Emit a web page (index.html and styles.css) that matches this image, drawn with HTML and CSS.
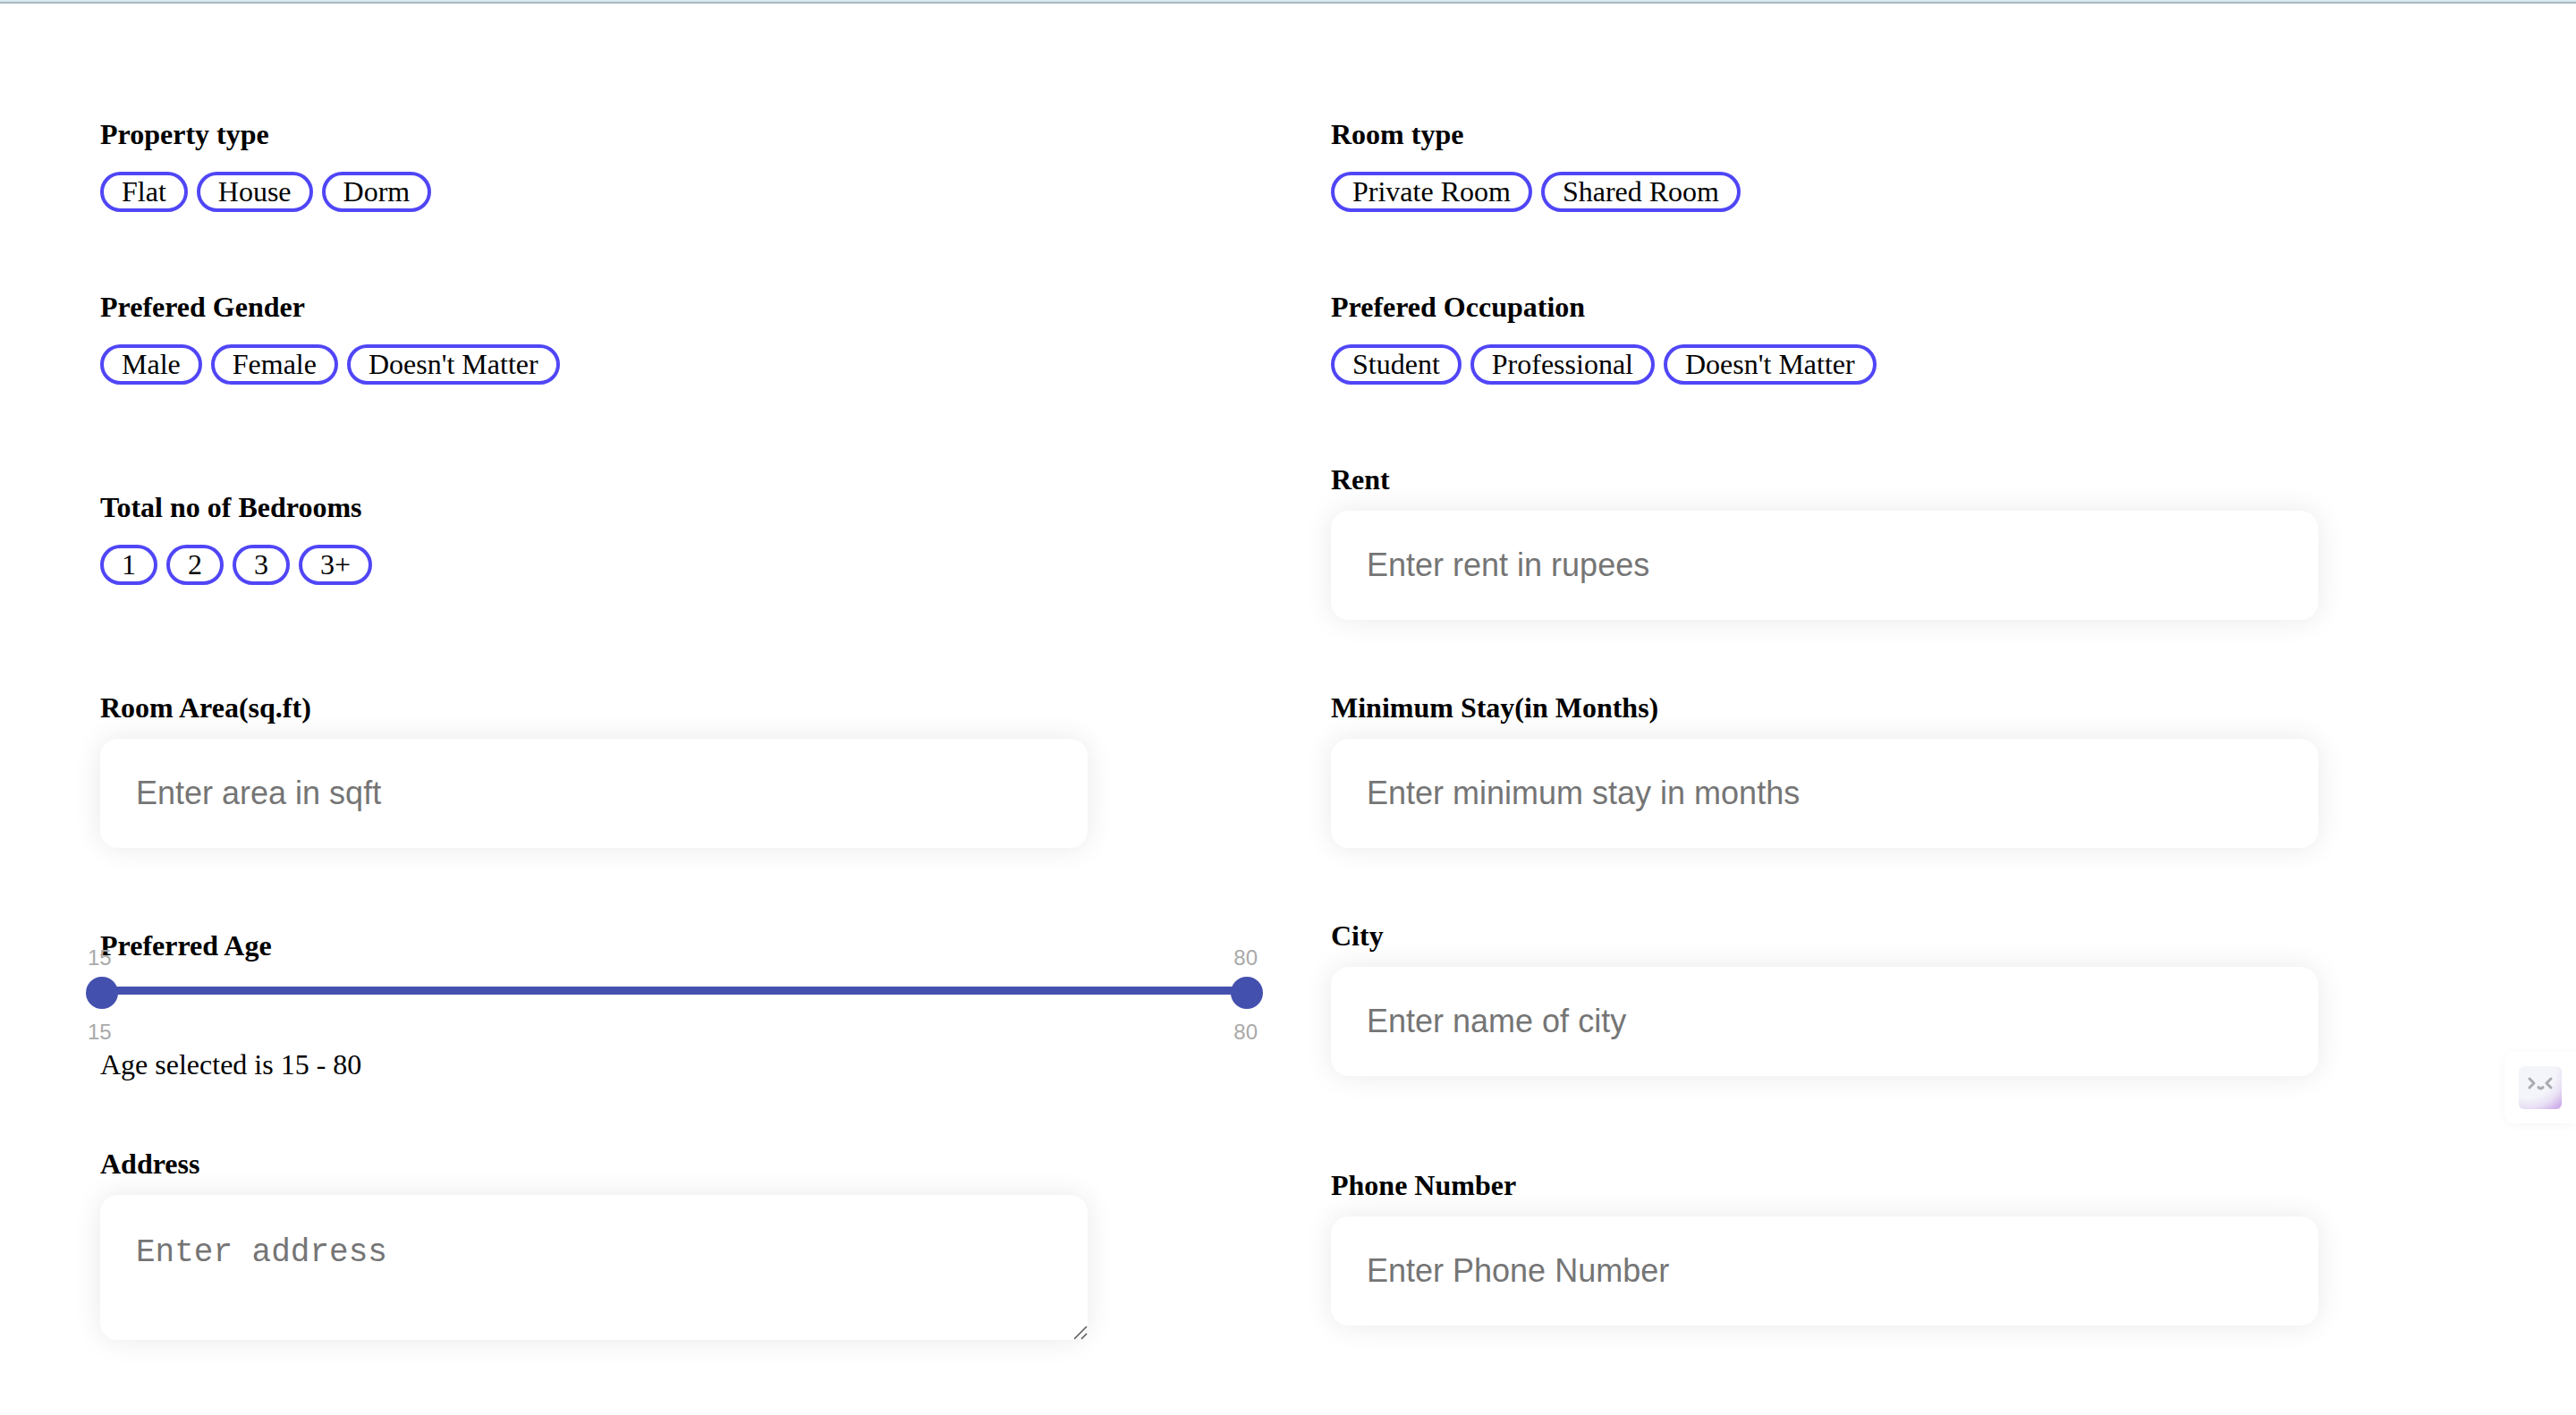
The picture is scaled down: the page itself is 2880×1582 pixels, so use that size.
FILE: index.html
```html
<!DOCTYPE html>
<html lang="en">
<head>
  <meta charset="utf-8">
  <meta name="viewport" content="width=device-width, initial-scale=1">
  <title>Room details</title>
  <link rel="stylesheet" href="styles.css">
</head>
<body>
  <form class="listing-form">
    <div class="field" role="group" aria-labelledby="property-type">
      <span class="field-label" id="property-type">Property type</span>
      <div class="chips">
        <button type="button" class="chip">Flat</button>
        <button type="button" class="chip">House</button>
        <button type="button" class="chip">Dorm</button>
      </div>
    </div>
    <div class="field" role="group" aria-labelledby="room-type">
      <span class="field-label" id="room-type">Room type</span>
      <div class="chips">
        <button type="button" class="chip">Private Room</button>
        <button type="button" class="chip">Shared Room</button>
      </div>
    </div>
    <div class="field" role="group" aria-labelledby="gender">
      <span class="field-label" id="gender">Prefered Gender</span>
      <div class="chips">
        <button type="button" class="chip">Male</button>
        <button type="button" class="chip">Female</button>
        <button type="button" class="chip">Doesn't Matter</button>
      </div>
    </div>
    <div class="field" role="group" aria-labelledby="occupation">
      <span class="field-label" id="occupation">Prefered Occupation</span>
      <div class="chips">
        <button type="button" class="chip">Student</button>
        <button type="button" class="chip">Professional</button>
        <button type="button" class="chip">Doesn't Matter</button>
      </div>
    </div>
    <div class="field" role="group" aria-labelledby="bedrooms">
      <span class="field-label" id="bedrooms">Total no of Bedrooms</span>
      <div class="chips">
        <button type="button" class="chip">1</button>
        <button type="button" class="chip">2</button>
        <button type="button" class="chip">3</button>
        <button type="button" class="chip">3+</button>
      </div>
    </div>
    <div class="field">
      <label class="field-label" for="rent">Rent</label>
      <input class="text-box" id="rent" type="text" placeholder="Enter rent in rupees">
    </div>
    <div class="field">
      <label class="field-label" for="area">Room Area(sq.ft)</label>
      <input class="text-box" id="area" type="text" placeholder="Enter area in sqft">
    </div>
    <div class="field">
      <label class="field-label" for="stay">Minimum Stay(in Months)</label>
      <input class="text-box" id="stay" type="text" placeholder="Enter minimum stay in months">
    </div>
    <div class="field age-field" role="group" aria-labelledby="age">
      <span class="age-label" id="age">Preferred Age</span>
      <div class="slider">
        <div class="slider-numbers"><span>15</span><span>80</span></div>
        <div class="slider-track">
          <input class="slider-input" type="range" min="15" max="80" value="15" aria-label="Youngest age">
          <input class="slider-input" type="range" min="15" max="80" value="80" aria-label="Oldest age">
        </div>
        <div class="slider-numbers"><span>15</span><span>80</span></div>
      </div>
      <span>Age selected is 15 - 80</span>
    </div>
    <div class="field">
      <label class="field-label" for="city">City</label>
      <input class="text-box" id="city" type="text" placeholder="Enter name of city">
    </div>
    <div class="field address-field">
      <label class="field-label" for="address">Address</label>
      <textarea class="text-box text-area" id="address" rows="2" placeholder="Enter address"></textarea>
    </div>
    <div class="field">
      <label class="field-label" for="phone">Phone Number</label>
      <input class="text-box" id="phone" type="tel" placeholder="Enter Phone Number">
    </div>
  </form>
  <button type="button" class="assistant" aria-label="Open assistant">
    <svg class="assistant-face" viewBox="0 0 48 48" aria-hidden="true">
      <defs>
        <radialGradient id="face-glow" cx="0" cy="0" r="1" gradientUnits="userSpaceOnUse" gradientTransform="translate(10 4) scale(56)">
          <stop offset="0.56" stop-color="#f4f5fa"/>
          <stop offset="0.76" stop-color="#e8dff4"/>
          <stop offset="0.96" stop-color="#cdaeea"/>
        </radialGradient>
      </defs>
      <rect width="48" height="48" rx="6" fill="url(#face-glow)"/>
      <g fill="none" stroke="#a9abb0" stroke-width="3" stroke-linecap="round" stroke-linejoin="round">
        <path d="M12 14l5 5-5 5"/>
        <path d="M36 14l-5 5 5 5"/>
        <path d="M22 23.500c1 2 4 2 5 0"/>
      </g>
    </svg>
  </button>
</body>
</html>
```
FILE: styles.css
```css
* {
  box-sizing: border-box;
}

body {
  margin: 0;
  border-top: 2px solid #dae8f0;
  background: #fff;
  color: #000;
  font-family: "Liberation Serif", "Times New Roman", serif;
  font-size: 32px;
  line-height: 37px;
}

body::before {
  content: "";
  display: block;
  height: 2px;
  background: #a9b9bf;
}

.listing-form {
  display: grid;
  grid-template-columns: 1fr 1fr;
  align-items: center;
  row-gap: 80px;
  padding: 128px 64px 72px;
}

.field {
  display: flex;
  flex-direction: column;
  align-items: flex-start;
  padding: 0 48px;
}

.field-label {
  margin-bottom: 16px;
  font-weight: bold;
}

.chips {
  display: flex;
  flex-wrap: wrap;
  gap: 10px;
  padding: 7px 0 8px;
}

.chip {
  padding: 0 20px;
  border: 4px solid #5046f6;
  border-radius: 24px;
  background: transparent;
  color: inherit;
  font: inherit;
}

.text-box {
  box-sizing: content-box;
  width: 80%;
  height: 42px;
  padding: 40px;
  border: 0;
  border-radius: 20px;
  background: #fff;
  box-shadow: 0 0 32px rgba(0, 0, 0, 0.09);
  color: #000;
  font: 36px/42px "Liberation Sans", Arial, sans-serif;
}

.text-box::placeholder {
  color: #757575;
  opacity: 1;
}

.text-area {
  height: 78px;
  padding-top: 44px;
  font: 36px/41px "Liberation Mono", "Courier New", monospace;
  resize: both;
}

.text-area::-webkit-resizer {
  background: url("data:image/svg+xml,%3Csvg xmlns='http://www.w3.org/2000/svg' width='15' height='15'%3E%3Cpath d='M0 14L14 0M8 14L14 8' stroke='%23555' stroke-width='1.5'/%3E%3C/svg%3E") no-repeat;
}

.address-field {
  padding-bottom: 7px;
}

.age-field {
  align-self: start;
  margin-bottom: -6px;
  padding-top: 11px;
}

.age-label {
  font-weight: bold;
}

.slider {
  align-self: stretch;
  margin: -19px -20px 4px -16px;
}

.slider-numbers {
  display: flex;
  justify-content: space-between;
  padding: 0 6px 0 2px;
  color: #a9a9a9;
  font: 24px/28px "Liberation Sans", Arial, sans-serif;
}

.slider-track {
  display: grid;
  margin: 7px 0 12px;
  background: linear-gradient(#4450ae, #4450ae) 16px 11px / calc(100% - 32px) 9px no-repeat;
}

.slider-input {
  grid-area: 1 / 1;
  width: 100%;
  height: 36px;
  margin: 0;
  background: transparent;
  appearance: none;
  pointer-events: none;
}

.slider-input::-webkit-slider-thumb {
  width: 36px;
  height: 36px;
  border: 0;
  border-radius: 50%;
  background: #4450ae;
  appearance: none;
  pointer-events: auto;
}

.assistant {
  position: fixed;
  right: 0;
  bottom: 326px;
  padding: 16px;
  border: 0;
  border-radius: 12px 0 0 12px;
  background: #fff;
  box-shadow: 0 2px 12px rgba(0, 0, 0, 0.04);
}

.assistant-face {
  display: block;
  width: 48px;
  height: 48px;
}
```
